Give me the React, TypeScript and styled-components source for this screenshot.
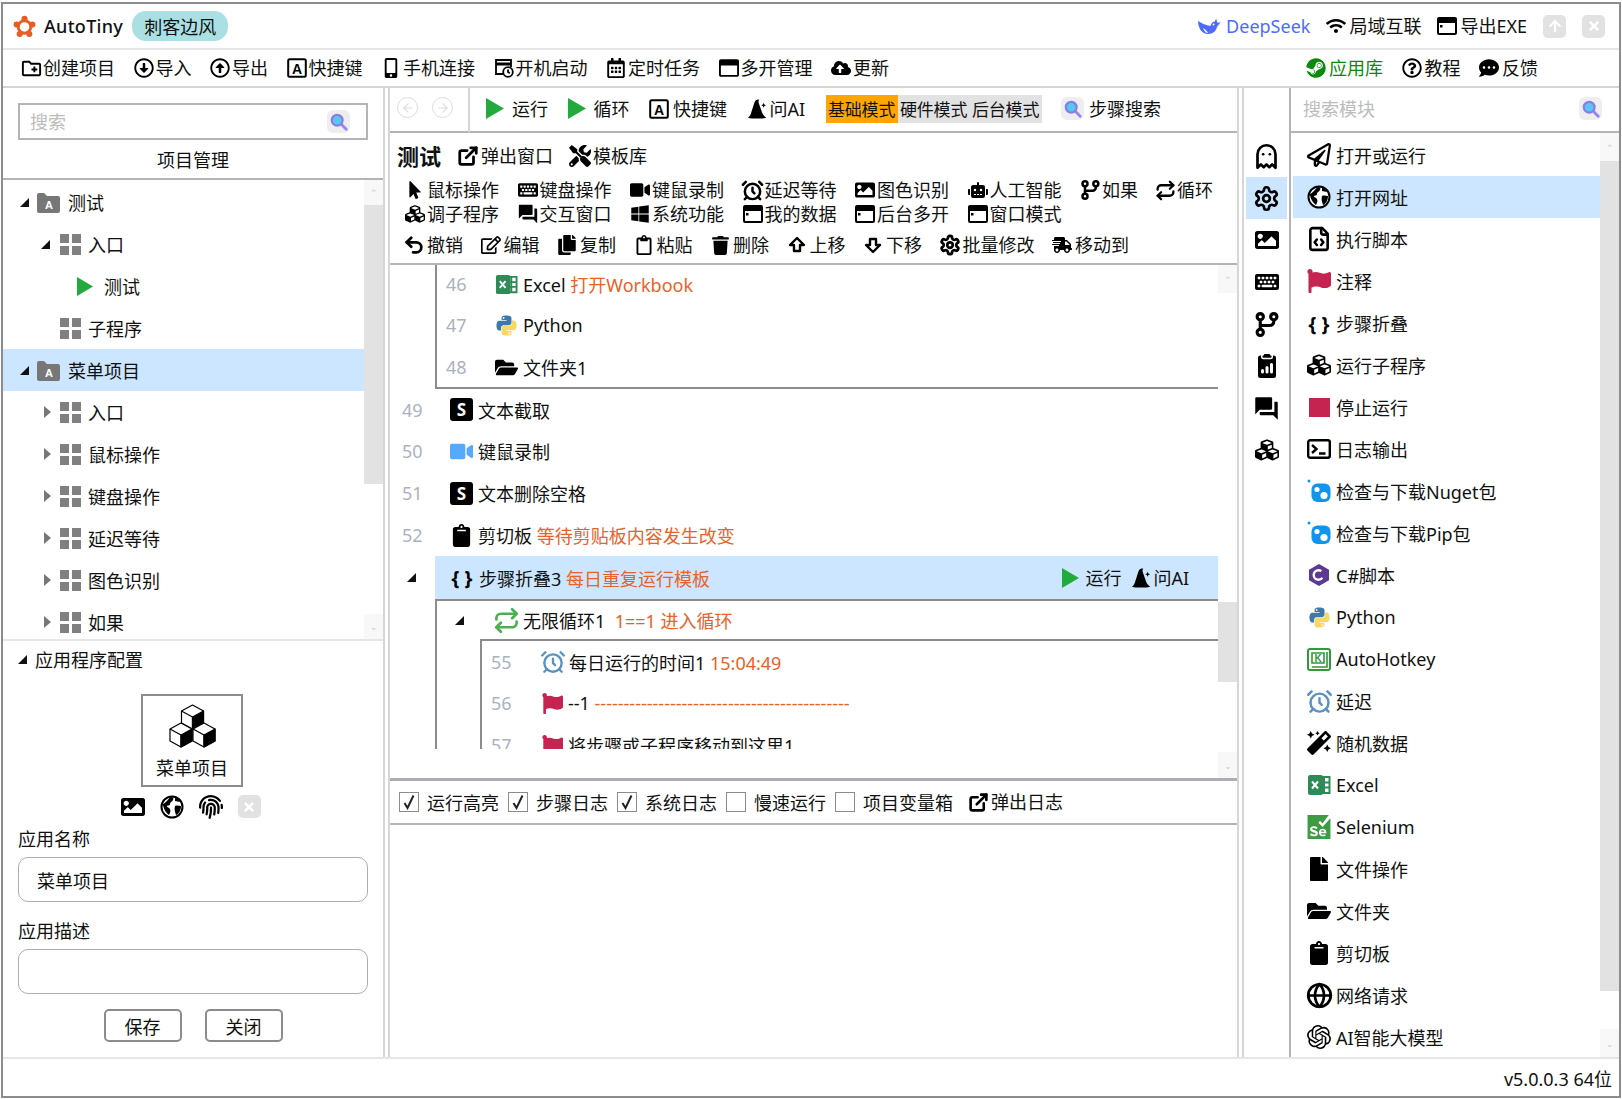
import React from "react";
import styled, { createGlobalStyle } from "styled-components";
import {
    FaRegArrowAltCircleDown,
    FaRegArrowAltCircleUp,
    FaMobileAlt,
    FaRegCalendarAlt,
    FaRegWindowMaximize,
    FaCloudUploadAlt,
    FaSteam,
    FaRegQuestionCircle,
    FaCommentDots,
    FaWifi,
    FaArrowUp,
    FaTimes,
    FaMousePointer,
    FaKeyboard,
    FaVideo,
    FaImage,
    FaRobot,
    FaCubes,
    FaWindows,
    FaRegEdit,
    FaCopy,
    FaRegClipboard,
    FaTrash,
    FaShippingFast,
    FaTools,
    FaRegPaperPlane,
    FaFlag,
    FaMagic,
    FaFile,
    FaFolderOpen,
    FaClipboard,
    FaFingerprint,
} from "react-icons/fa";
import { MdOutlineCreateNewFolder, MdForum } from "react-icons/md";
import { BsClipboard2DataFill } from "react-icons/bs";
import { SiSelenium, SiOpenai } from "react-icons/si";
import {
    LuAlarmClock,
    LuArrowBigDown,
    LuArrowBigUp,
    LuArrowLeft,
    LuArrowRight,
    LuExternalLink,
    LuFileCode,
    LuGhost,
    LuGlobe,
    LuRepeat,
    LuSettings,
    LuUndo2,
} from "react-icons/lu";

const GlobalStyle = createGlobalStyle`
    html, body {
        margin: 0;
        padding: 0;
        background: #fff;
    }
    body {
        font-family: "Noto Sans", "Noto Sans CJK SC", sans-serif;
        font-size: 18px;
        color: #111;
        overflow: hidden;
    }
    * {
        box-sizing: border-box;
    }
    svg {
        flex: none;
    }
`;

const Page = styled.div`
    width: 1622px;
    height: 1099px;
    padding: 2px 1px 1px 1px;
`;

const Window = styled.div`
    width: 100%;
    height: 100%;
    border: 2px solid #8c8c8c;
    display: flex;
    flex-direction: column;
    background: #fff;
`;

const TitleBar = styled.div`
    height: 46px;
    flex: none;
    display: flex;
    align-items: center;
    padding: 0 14px 0 10px;
    border-bottom: 2px solid #e6e6e6;
`;

const AppName = styled.span`
    margin-left: 8px;
    font-weight: 500;
    font-size: 18px;
    letter-spacing: 0.3px;
`;

const Chip = styled.span`
    margin-left: 9px;
    width: 96px;
    height: 30px;
    border-radius: 14px;
    background: #aae0e3;
    display: flex;
    align-items: center;
    justify-content: center;
`;

const Spacer = styled.div`
    flex: 1;
`;

const Item = styled.span<{ $gap?: number; $color?: string }>`
    display: inline-flex;
    align-items: center;
    gap: ${(p) => p.$gap ?? 2}px;
    color: ${(p) => p.$color ?? "inherit"};
    white-space: nowrap;
    line-height: 24px;
`;

const Ico = styled.span<{ $s?: number; $w?: number; $c?: string }>`
    flex: none;
    display: inline-flex;
    align-items: center;
    justify-content: center;
    width: ${(p) => p.$w ?? p.$s ?? 20}px;
    height: ${(p) => p.$s ?? 20}px;
    font-size: ${(p) => p.$s ?? 20}px;
    color: ${(p) => p.$c ?? "#000"};
`;

const TitleRight = styled.div`
    display: flex;
    align-items: center;
    gap: 16px;
`;

const WinButton = styled.span`
    width: 23px;
    height: 23px;
    border-radius: 5px;
    background: #e2e2e2;
    color: #fff;
    display: inline-flex;
    align-items: center;
    justify-content: center;
    font-size: 14px;
`;

const MenuBar = styled.div`
    height: 38px;
    flex: none;
    display: flex;
    align-items: center;
    gap: 18.5px;
    padding: 0 81px 0 18px;
    border-bottom: 2px solid #d4d4d4;
`;

const Body = styled.div`
    flex: 1;
    min-height: 0;
    display: flex;
`;

const LeftPanel = styled.div`
    width: 380px;
    flex: none;
    display: flex;
    flex-direction: column;
`;

const Splitter = styled.div`
    width: 7px;
    flex: none;
    border-left: 2px solid #d6d6d6;
    border-right: 2px solid #d6d6d6;
`;

const SearchWrap = styled.div`
    margin: 15px 15px 0 15px;
    height: 37px;
    border: 2px solid #b4b4b8;
    display: flex;
    align-items: center;
    padding: 0 16px 0 10px;
`;

const SearchInput = styled.input`
    flex: 1;
    min-width: 0;
    border: none;
    outline: none;
    background: transparent;
    font: inherit;
    color: #111;
    padding: 0;
    &::placeholder {
        color: #bcbcbc;
        opacity: 1;
    }
`;

const SearchBtn = styled.span`
    width: 23px;
    height: 23px;
    border-radius: 6px;
    background: #eeeef0;
    display: inline-flex;
    align-items: center;
    justify-content: center;
    flex: none;
`;

const TreeTitle = styled.div`
    height: 40px;
    flex: none;
    display: flex;
    align-items: center;
    justify-content: center;
    border-bottom: 2px solid #b4b4b8;
`;

const TreeArea = styled.div`
    height: 461px;
    flex: none;
    display: flex;
    border-bottom: 2px solid #e6e6e6;
`;

const TreeList = styled.div`
    flex: 1;
    min-width: 0;
    overflow: hidden;
    padding-top: 1px;
`;

const TreeRow = styled.div<{ $pad: number; $active?: boolean }>`
    height: 42px;
    display: flex;
    align-items: center;
    padding-left: ${(p) => p.$pad}px;
    background: ${(p) => (p.$active ? "#cce6ff" : "transparent")};
`;

const TreeLabel = styled.span<{ $ml: number }>`
    margin-left: ${(p) => p.$ml}px;
`;

const ArrowSlot = styled.span<{ $w: number }>`
    width: ${(p) => p.$w}px;
    flex: none;
    display: inline-flex;
    align-items: center;
`;

const Track = styled.div`
    width: 19px;
    flex: none;
    display: flex;
    flex-direction: column;
    background: #fff;
`;

const TrackBtn = styled.div<{ $h: number }>`
    height: ${(p) => p.$h}px;
    flex: none;
    background: #f8f8f8;
    color: #c8c8c8;
    font-size: 9px;
    display: flex;
    align-items: center;
    justify-content: center;
`;

const TrackGap = styled.div<{ $h: number }>`
    height: ${(p) => p.$h}px;
    flex: none;
`;

const Thumb = styled.div<{ $h: number }>`
    height: ${(p) => p.$h}px;
    flex: none;
    background: #e2e2e2;
`;

const Config = styled.div`
    flex: 1;
    min-height: 0;
    display: flex;
    flex-direction: column;
    padding: 0 15px;
`;

const ConfigHead = styled.div`
    height: 36px;
    flex: none;
    display: flex;
    align-items: center;
    gap: 8px;
`;

const AppCard = styled.div`
    margin: 17px auto 0;
    width: 102px;
    height: 93px;
    flex: none;
    border: 2px solid #8c8c8c;
    display: flex;
    flex-direction: column;
    align-items: center;
    padding-top: 8px;
    gap: 5px;
    transform: translateX(-1px);
`;

const CardIcons = styled.div`
    margin-top: 8px;
    display: flex;
    justify-content: center;
    gap: 15px;
    height: 24px;
    flex: none;
    margin-left: -5px;
`;

const FieldLabel = styled.div<{ $mt: number }>`
    height: 24px;
    flex: none;
    line-height: 24px;
    margin-top: ${(p) => p.$mt}px;
`;

const Field = styled.div`
    height: 45px;
    flex: none;
    border: 1.5px solid #adadb2;
    border-radius: 10px;
    display: flex;
    align-items: center;
    padding-left: 18px;
    margin-top: 6px;
`;

const Buttons = styled.div`
    margin-top: 15px;
    display: flex;
    justify-content: center;
    gap: 23px;
`;

const Button = styled.button`
    width: 78px;
    height: 33px;
    border: 2px solid #8c8c8c;
    border-radius: 5px;
    background: #fff;
    font: inherit;
    color: #111;
    padding: 0;
`;

const Center = styled.div`
    width: 847px;
    flex: none;
    display: flex;
    flex-direction: column;
`;

const ToolBar = styled.div`
    height: 45px;
    flex: none;
    display: flex;
    align-items: center;
    padding-bottom: 2px;
    border-bottom: 2px solid #b4b4b8;
`;

const NavGroup = styled.div`
    width: 80px;
    height: 45px;
    margin-top: 2px;
    flex: none;
    display: flex;
    align-items: center;
    gap: 14px;
    padding: 0 0 4px 7px;
    border-right: 2px solid #d6d6d6;
`;

const NavBtn = styled.span`
    width: 21px;
    height: 21px;
    border: 1.5px solid #dcdcdc;
    border-radius: 50%;
    color: #dcdcdc;
    font-size: 14px;
    display: inline-flex;
    align-items: center;
    justify-content: center;
`;

const ToolItems = styled.div`
    display: flex;
    align-items: center;
    padding-left: 16px;
    gap: 19.5px;
`;

const ModeGroup = styled.div`
    display: flex;
    height: 28px;
    background: #e2e2e2;
    margin-left: 1px;
`;

const Mode = styled.span<{ $on?: boolean }>`
    width: 72px;
    background: ${(p) => (p.$on ? "#ffa500" : "transparent")};
    display: flex;
    align-items: center;
    justify-content: center;
    font-size: 17px;
    letter-spacing: -0.2px;
    white-space: nowrap;
`;

const Heading = styled.div`
    flex: none;
    height: 132px;
    display: flex;
    flex-direction: column;
    border-bottom: 2px solid #b4b4b8;
`;

const NameRow = styled.div`
    height: 42px;
    flex: none;
    display: flex;
    align-items: center;
    gap: 16px;
    padding-left: 7px;
    padding-top: 3px;
`;

const NameTitle = styled.span`
    font-size: 22px;
    font-weight: 700;
    line-height: 1;
`;

const ToolGrid = styled.div`
    margin-top: 3px;
    padding-left: 16px;
    display: grid;
    grid-template-columns: repeat(6, 112.5px) 75px auto;
    grid-auto-rows: 24px;
`;

const ActionRow = styled.div`
    margin-top: 7px;
    padding-left: 15px;
    display: flex;
    gap: 18.5px;
`;

const StepsArea = styled.div`
    height: 516px;
    flex: none;
    display: flex;
    border-bottom: 3px solid #adadb2;
`;

const StepsColumn = styled.div`
    flex: 1;
    min-width: 0;
    height: 484px;
    overflow: hidden;
`;

const NestBlock = styled.div<{ $ml: number; $top?: boolean; $bottom?: boolean }>`
    margin-left: ${(p) => p.$ml}px;
    border-left: 2px solid #8c8c8c;
    border-top: ${(p) => (p.$top ? "2px solid #8c8c8c" : "none")};
    border-bottom: ${(p) => (p.$bottom ? "2px solid #8c8c8c" : "none")};
`;

const StepRow = styled.div<{ $h?: number }>`
    height: ${(p) => p.$h ?? 42}px;
    display: flex;
    align-items: center;
`;

const Gutter = styled.div<{ $w: number; $pad: number }>`
    width: ${(p) => p.$w}px;
    flex: none;
    padding-left: ${(p) => p.$pad}px;
    color: #aab2c2;
    display: flex;
    align-items: center;
`;

const StepBody = styled.div<{ $active?: boolean }>`
    flex: 1;
    min-width: 0;
    height: 100%;
    display: flex;
    align-items: center;
    gap: 5px;
    padding-left: 15px;
    padding-right: 29px;
    background: ${(p) => (p.$active ? "#cce6ff" : "transparent")};
    white-space: nowrap;
`;

const Note = styled.span`
    color: #e8622a;
`;

const RowActions = styled.div`
    margin-left: auto;
    display: flex;
    align-items: center;
    gap: 10px;
`;

const SBadge = styled.span`
    width: 23px;
    height: 23px;
    border-radius: 3px;
    background: #000;
    color: #fff;
    font-weight: 700;
    font-size: 17px;
    display: inline-flex;
    align-items: center;
    justify-content: center;
    flex: none;
`;

const Braces = styled.span`
    width: 24px;
    flex: none;
    font-weight: 700;
    font-size: 20px;
    text-align: center;
    color: #000;
    white-space: nowrap;
`;

const CheckRow = styled.div`
    height: 44px;
    flex: none;
    display: flex;
    align-items: center;
    padding-left: 9px;
    border-bottom: 2px solid #b4b4b8;
`;

const CheckItem = styled.label`
    display: inline-flex;
    align-items: center;
    gap: 8px;
    margin-right: 9px;
`;

const CheckBox = styled.span`
    width: 20px;
    height: 20px;
    border: 1.5px solid #8c8c8c;
    display: inline-flex;
    align-items: center;
    justify-content: center;
    flex: none;
`;

const PopLog = styled(Item)`
    margin-left: 6px;
`;

const LogArea = styled.div`
    flex: 1;
    min-height: 0;
`;

const SideRail = styled.div`
    width: 47px;
    flex: none;
    display: flex;
    flex-direction: column;
    padding-top: 47px;
    border-right: 2px solid #b4b4b8;
`;

const RailBtn = styled.div<{ $active?: boolean }>`
    height: 42px;
    margin: 0 2px;
    display: flex;
    align-items: center;
    justify-content: center;
    background: ${(p) => (p.$active ? "#cce6ff" : "transparent")};
`;

const Modules = styled.div`
    flex: 1;
    min-width: 0;
    display: flex;
    flex-direction: column;
`;

const ModuleSearch = styled.div`
    height: 45px;
    flex: none;
    display: flex;
    align-items: center;
    padding: 0 17px 2px 12px;
    border-bottom: 2px solid #b4b4b8;
`;

const ModuleArea = styled.div`
    flex: 1;
    min-height: 0;
    display: flex;
`;

const ModuleList = styled.div`
    flex: 1;
    min-width: 0;
    padding: 1px 0 0 2px;
    overflow: hidden;
`;

const ModuleRow = styled.div<{ $active?: boolean }>`
    height: 42px;
    display: flex;
    align-items: center;
    gap: 5px;
    padding-left: 14px;
    background: ${(p) => (p.$active ? "#cce6ff" : "transparent")};
`;

const StopSquare = styled.span`
    width: 21px;
    height: 19px;
    background: #c4244f;
    display: block;
`;

const StatusBar = styled.div`
    height: 39px;
    flex: none;
    display: flex;
    align-items: center;
    justify-content: flex-end;
    padding-right: 7px;
    border-top: 2px solid #e6e6e6;
`;

const Logo = () => (
    <svg width="23" height="23" viewBox="0 0 24 24">
        <circle cx="12" cy="12.5" r="6.5" fill="none" stroke="#e85d26" strokeWidth="3" />
        <circle cx="12" cy="4" r="3.2" fill="#e85d26" />
        <circle cx="3.8" cy="10" r="3.2" fill="#e85d26" />
        <circle cx="20.2" cy="10" r="3.2" fill="#e85d26" />
        <circle cx="7" cy="19.8" r="3.2" fill="#e85d26" />
        <circle cx="17" cy="19.8" r="3.2" fill="#e85d26" />
    </svg>
);

const Whale = () => (
    <svg width="24" height="22" viewBox="0 0 24 22" fill="#4d6bfe">
        <path d="M1 6c0 7 4 13 10 13 5 0 8-3 9-7 1-2 3-3 3.5-5-1 .8-2.5 1-3.5.2 0-1-.5-2.5-.5-3.2-1 .5-1.5 1.500-1.5 2.500-2.500 0-4 2-4.500 4.500C9 10.500 5 8.500 1 6z" />
        <path d="M6 13c2 1 4 3 5 5-2 0-4-2-5-5z" fill="#fff" />
        <circle cx="16.5" cy="9.5" r="1" fill="#fff" />
    </svg>
);

const WindowIcon = ({ size = 20 }: { size?: number }) => (
    <svg width={size} height={size} viewBox="0 0 20 20">
        <rect x="1" y="2" width="18" height="16" fill="none" stroke="#000" strokeWidth="2" rx="1" />
        <rect x="1" y="2" width="18" height="5" fill="#000" />
        <rect x="3" y="9" width="2.5" height="2.5" fill="#000" />
    </svg>
);

const BootIcon = () => (
    <svg width="20" height="20" viewBox="0 0 20 20" fill="none" stroke="#000" strokeWidth="1.8">
        <path d="M9 16H2V2h15v7" />
        <path d="M2 6h15" strokeWidth="3" />
        <circle cx="14" cy="14" r="4.8" fill="#fff" />
        <path d="M14 11.5V14l1.8 1.2" />
    </svg>
);

const BoxedA = () => (
    <svg width="20" height="20" viewBox="0 0 20 20">
        <rect x="1.2" y="1.2" width="17.6" height="17.6" rx="1.5" fill="none" stroke="#000" strokeWidth="2" />
        <text x="10" y="15.5" fontSize="14" fontWeight="700" textAnchor="middle" fontFamily="Liberation Sans, sans-serif">
            A
        </text>
    </svg>
);

const Magnifier = () => (
    <svg width="18" height="18" viewBox="0 0 20 20">
        <path d="M12 12l6 6" stroke="#9a86e8" strokeWidth="3.2" strokeLinecap="round" />
        <circle cx="8" cy="8" r="6" fill="#55c8ee" stroke="#8a7ce6" strokeWidth="2.4" />
    </svg>
);

const Play = ({ size = 18 }: { size?: number }) => (
    <svg width={size} height={size + 3} viewBox="0 0 16 20" preserveAspectRatio="none">
        <path d="M0 0l16 10L0 20z" fill="#22aa3c" />
    </svg>
);

const GridIcon = () => (
    <svg width="21" height="21" viewBox="0 0 21 21" fill="#808080">
        <rect width="9" height="9" />
        <rect x="12" width="9" height="9" />
        <rect y="12" width="9" height="9" />
        <rect x="12" y="12" width="9" height="9" />
    </svg>
);

const ProjectFolder = () => (
    <svg width="23" height="21" viewBox="0 0 23 21">
        <path d="M0 3a2 2 0 0 1 2-2h5l3 3h11a2 2 0 0 1 2 2v13a2 2 0 0 1-2 2H2a2 2 0 0 1-2-2z" fill="#777" />
        <text x="12" y="17" fontSize="11" fontWeight="700" fill="#fff" textAnchor="middle" fontFamily="Liberation Sans, sans-serif">
            A
        </text>
    </svg>
);

const Open = ({ size = 9 }: { size?: number }) => (
    <svg width={size} height={size} viewBox="0 0 9 9">
        <path d="M9 0v9H0z" fill="#111" />
    </svg>
);

const Closed = () => (
    <svg width="7" height="12" viewBox="0 0 7 12">
        <path d="M0 0l7 6-7 6z" fill="#777" />
    </svg>
);

const ExcelIcon = ({ size = 23 }: { size?: number }) => (
    <svg width={size} height={size} viewBox="0 0 24 24">
        <rect x="1" y="2" width="15" height="20" rx="2" fill="#2e8b57" />
        <path d="M12 4h10.5v16H12M12 9.5h10.5M12 14.5h10.5M17 4v16" fill="none" stroke="#2e8b57" strokeWidth="2" />
        <path d="M5 8.5l6 7M11 8.5l-6 7" stroke="#fff" strokeWidth="2" />
    </svg>
);

const PYTHON_PATH =
    "M11.9 1.5c-5.3 0-5 2.3-5 2.3v2.5H12V7H4.9S1.5 6.6 1.5 12s3 5.2 3 5.2h1.800v-2.500s-.1-3 3-3h5.100s2.800 0 2.800-2.800V4.300s.4-2.800-5.300-2.800zM9 3.200a.9.9 0 1 1 0 1.800.9.9 0 0 1 0-1.800z";

const PythonIcon = ({ size = 23 }: { size?: number }) => (
    <svg width={size} height={size} viewBox="0 0 24 24">
        <path d={PYTHON_PATH} fill="#3d7aab" />
        <path d={PYTHON_PATH} fill="#f7d865" transform="rotate(180 12 12)" />
    </svg>
);

const NugetIcon = () => (
    <svg width="24" height="24" viewBox="0 0 24 24">
        <circle cx="2" cy="2" r="1.5" fill="#1194ee" />
        <rect x="4.5" y="4.5" width="19" height="18.5" rx="6" fill="#1194ee" />
        <circle cx="10" cy="10.5" r="2.6" fill="#fff" />
        <circle cx="17" cy="16.5" r="3.6" fill="#fff" />
    </svg>
);

const CSharpIcon = () => (
    <svg width="22" height="24" viewBox="0 0 22 24">
        <path d="M11 1l10 5.7v10.6L11 23 1 17.3V6.7z" fill="#5c3a94" />
        <circle cx="10.5" cy="12" r="4.8" fill="none" stroke="#fff" strokeWidth="2.4" strokeDasharray="22 8" strokeDashoffset="-3" />
    </svg>
);

const AhkIcon = () => (
    <svg width="24" height="23" viewBox="0 0 24 23">
        <rect x="1" y="1" width="22" height="21" rx="2" fill="none" stroke="#2e9a38" strokeWidth="2" />
        <path d="M5 5h12v10H5zM20 4v15H5" fill="none" stroke="#2e9a38" strokeWidth="1.6" />
        <text x="11" y="13.5" fontSize="10" fontWeight="700" fill="#2e9a38" textAnchor="middle" fontFamily="Liberation Sans, sans-serif">
            K
        </text>
    </svg>
);

const CubesArt = () => (
    <svg width="47" height="45" viewBox="0 0 47 45" stroke="#000" strokeWidth="1.2" strokeLinejoin="round">
        <path d="M23.5 1l11 6v12l-11 6-11-6V7z" fill="#fff" />
        <path d="M23.5 13l11-6v12l-11 6z" fill="#000" />
        <path d="M12.5 7l11 6v12" fill="none" />
        <path d="M12 19l11 6v12l-11 6-11-6V25z" fill="#fff" />
        <path d="M12 31l11-6v12l-11 6z" fill="#000" />
        <path d="M1 25l11 6v12" fill="none" />
        <path d="M35 19l11 6v12l-11 6-11-6V25z" fill="#fff" />
        <path d="M35 31l11-6v12l-11 6z" fill="#000" />
        <path d="M24 25l11 6v12" fill="none" />
    </svg>
);

const Tick = () => (
    <svg width="12" height="16" viewBox="0 0 12 16">
        <path d="M1.5 9l3 5L10.5 1.5" fill="none" stroke="#222" strokeWidth="2" />
    </svg>
);

const BranchIcon = ({ size = 20 }: { size?: number }) => (
    <svg width={size} height={size} viewBox="0 0 24 24" fill="none" stroke="#000" strokeWidth="3">
        <circle cx="6" cy="4.5" r="3" />
        <circle cx="19" cy="4.5" r="3" />
        <circle cx="6" cy="19.5" r="3" />
        <path d="M6 7.5v9M19 7.5V9a4 4 0 0 1-4 4H6" />
    </svg>
);

const WizardHat = ({ size = 21 }: { size?: number }) => (
    <svg width={size} height={size} viewBox="0 0 24 24" fill="#000">
        <path d="M1 22.5c2-1 3-3 4-6.5l3.5-11c.8-2.5 3.5-4 5.500-3-1 1-1 2.500-.5 4l3.500 10c.8 2.500 2.500 5 5 6.500-3 1-6 1-10.500 1s-7.500 0-10.500-1z" />
        <path d="M19 5.5l.8 2 2 .7-2 .8-.8 2-.8-2-2-.8 2-.7z" />
    </svg>
);

const TerminalIcon = () => (
    <svg width="24" height="20" viewBox="0 0 24 20" fill="none" stroke="#000" strokeWidth="2.4">
        <rect x="1.2" y="1.2" width="21.6" height="17.6" rx="2" />
        <path d="M5 6l4.5 4L5 14M12 14.5h6.5" />
    </svg>
);

const EarthIcon = ({ size = 24 }: { size?: number }) => (
    <svg width={size} height={size} viewBox="0 0 24 24" fill="#000">
        <circle cx="12" cy="12" r="10.5" fill="#fff" stroke="#000" strokeWidth="2" />
        <path d="M3 9c3-1 5-5 8-7 2 0 3 1 2 3-1 2-3 2-3 4s-2 1-3 2c0 2 2 1 3 3s0 4-1 6C6 18 3 13 3 9z" />
        <path d="M15 11c2-1 4 0 6 0 0 4-2 8-5 9-1-3-2-6-1-9z" />
        <path d="M15 3c2 0 4 2 5 4-2 0-3-1-5-1z" />
    </svg>
);

const menuItems = [
    { icon: <MdOutlineCreateNewFolder size={23} />, label: "创建项目" },
    { icon: <FaRegArrowAltCircleDown />, label: "导入" },
    { icon: <FaRegArrowAltCircleUp />, label: "导出" },
    { icon: <BoxedA />, label: "快捷键" },
    { icon: <FaMobileAlt />, label: "手机连接" },
    { icon: <BootIcon />, label: "开机启动" },
    { icon: <FaRegCalendarAlt />, label: "定时任务" },
    { icon: <FaRegWindowMaximize />, label: "多开管理" },
    { icon: <FaCloudUploadAlt />, label: "更新" },
];

const toolItems = [
    { icon: <FaMousePointer />, label: "鼠标操作" },
    { icon: <FaKeyboard size={20} />, label: "键盘操作" },
    { icon: <FaVideo size={20} />, label: "键鼠录制" },
    { icon: <LuAlarmClock size={23} strokeWidth={2.6} />, label: "延迟等待" },
    { icon: <FaImage size={20} />, label: "图色识别" },
    { icon: <FaRobot size={20} />, label: "人工智能" },
    { icon: <BranchIcon />, label: "如果" },
    { icon: <LuRepeat size={21} strokeWidth={2.6} />, label: "循环" },
    { icon: <FaCubes size={20} />, label: "调子程序" },
    { icon: <MdForum size={22} />, label: "交互窗口" },
    { icon: <FaWindows size={20} />, label: "系统功能" },
    { icon: <WindowIcon size={20} />, label: "我的数据" },
    { icon: <WindowIcon size={20} />, label: "后台多开" },
    { icon: <WindowIcon size={20} />, label: "窗口模式" },
];

const actionItems = [
    { icon: <LuUndo2 size={22} strokeWidth={3} />, label: "撤销" },
    { icon: <FaRegEdit size={20} />, label: "编辑" },
    { icon: <FaCopy size={20} />, label: "复制" },
    { icon: <FaRegClipboard size={20} />, label: "粘贴" },
    { icon: <FaTrash size={19} />, label: "删除" },
    { icon: <LuArrowBigUp size={24} strokeWidth={2.4} />, label: "上移" },
    { icon: <LuArrowBigDown size={24} strokeWidth={2.4} />, label: "下移" },
    { icon: <LuSettings size={22} strokeWidth={3} />, label: "批量修改" },
    { icon: <FaShippingFast size={20} />, label: "移动到" },
];

const treeChildren = ["入口", "鼠标操作", "键盘操作", "延迟等待", "图色识别", "如果"];

const railIcons = [
    <LuGhost size={27} strokeWidth={2.4} />,
    <LuSettings size={27} strokeWidth={2.4} />,
    <FaImage />,
    <FaKeyboard />,
    <BranchIcon size={25} />,
    <BsClipboard2DataFill />,
    <MdForum size={27} />,
    <FaCubes />,
];

const modules = [
    { icon: <FaRegPaperPlane />, label: "打开或运行" },
    { icon: <EarthIcon />, label: "打开网址" },
    { icon: <LuFileCode size={26} strokeWidth={2.4} />, label: "执行脚本" },
    { icon: <FaFlag />, color: "#c4244f", label: "注释" },
    { icon: <Braces>{"{ }"}</Braces>, label: "步骤折叠" },
    { icon: <FaCubes />, label: "运行子程序" },
    { icon: <StopSquare />, label: "停止运行" },
    { icon: <TerminalIcon />, label: "日志输出" },
    { icon: <NugetIcon />, label: "检查与下载Nuget包" },
    { icon: <NugetIcon />, label: "检查与下载Pip包" },
    { icon: <CSharpIcon />, label: "C#脚本" },
    { icon: <PythonIcon />, label: "Python" },
    { icon: <AhkIcon />, label: "AutoHotkey" },
    { icon: <LuAlarmClock size={27} strokeWidth={2.2} />, color: "#5b92c0", label: "延迟" },
    { icon: <FaMagic />, label: "随机数据" },
    { icon: <ExcelIcon size={24} />, label: "Excel" },
    { icon: <SiSelenium />, color: "#3d9b45", label: "Selenium" },
    { icon: <FaFile />, label: "文件操作" },
    { icon: <FaFolderOpen />, label: "文件夹" },
    { icon: <FaClipboard />, label: "剪切板" },
    { icon: <LuGlobe size={27} strokeWidth={2.4} />, label: "网络请求" },
    { icon: <SiOpenai />, label: "AI智能大模型" },
];

const ScrollTrack = ({ top, thumb, gap, bottom }: { top: number; thumb: number; gap: number; bottom: number }) => (
    <Track>
        <TrackBtn $h={top}>⌃</TrackBtn>
        <TrackGap $h={gap} />
        <Thumb $h={thumb} />
        <Spacer />
        <TrackBtn $h={bottom}>⌄</TrackBtn>
    </Track>
);

const App = () => {
    return (
        <Page>
            <GlobalStyle />
            <Window>
                <TitleBar>
                    <Logo />
                    <AppName>AutoTiny</AppName>
                    <Chip>刺客边风</Chip>
                    <Spacer />
                    <TitleRight>
                        <Item $gap={5} $color="#4d6bfe">
                            <Whale />
                            DeepSeek
                        </Item>
                        <Item $gap={3}>
                            <Ico $s={20}><FaWifi /></Ico>
                            局域互联
                        </Item>
                        <Item $gap={3}>
                            <WindowIcon />
                            导出EXE
                        </Item>
                        <WinButton><FaArrowUp /></WinButton>
                        <WinButton><FaTimes /></WinButton>
                    </TitleRight>
                </TitleBar>

                <MenuBar>
                    {menuItems.map((m) => (
                        <Item key={m.label}>
                            <Ico>{m.icon}</Ico>
                            {m.label}
                        </Item>
                    ))}
                    <Spacer />
                    <Item $color="#0a8a0a" $gap={3}>
                        <Ico $c="#0a8a0a"><FaSteam /></Ico>
                        应用库
                    </Item>
                    <Item $gap={3}>
                        <Ico><FaRegQuestionCircle /></Ico>
                        教程
                    </Item>
                    <Item $gap={3}>
                        <Ico><FaCommentDots /></Ico>
                        反馈
                    </Item>
                </MenuBar>

                <Body>
                    <LeftPanel>
                        <SearchWrap>
                            <SearchInput placeholder="搜索" readOnly />
                            <SearchBtn><Magnifier /></SearchBtn>
                        </SearchWrap>
                        <TreeTitle>项目管理</TreeTitle>
                        <TreeArea>
                            <TreeList>
                                <TreeRow $pad={17}>
                                    <ArrowSlot $w={17}><Open /></ArrowSlot>
                                    <ProjectFolder />
                                    <TreeLabel $ml={8}>测试</TreeLabel>
                                </TreeRow>
                                <TreeRow $pad={38}>
                                    <ArrowSlot $w={19}><Open /></ArrowSlot>
                                    <GridIcon />
                                    <TreeLabel $ml={7}>入口</TreeLabel>
                                </TreeRow>
                                <TreeRow $pad={74}>
                                    <Play size={16} />
                                    <TreeLabel $ml={11}>测试</TreeLabel>
                                </TreeRow>
                                <TreeRow $pad={57}>
                                    <GridIcon />
                                    <TreeLabel $ml={7}>子程序</TreeLabel>
                                </TreeRow>
                                <TreeRow $pad={17} $active>
                                    <ArrowSlot $w={17}><Open /></ArrowSlot>
                                    <ProjectFolder />
                                    <TreeLabel $ml={8}>菜单项目</TreeLabel>
                                </TreeRow>
                                {treeChildren.map((c) => (
                                    <TreeRow $pad={41} key={c}>
                                        <ArrowSlot $w={16}><Closed /></ArrowSlot>
                                        <GridIcon />
                                        <TreeLabel $ml={7}>{c}</TreeLabel>
                                    </TreeRow>
                                ))}
                            </TreeList>
                            <ScrollTrack top={25} thumb={279} gap={0} bottom={25} />
                        </TreeArea>

                        <Config>
                            <ConfigHead>
                                <Open />
                                应用程序配置
                            </ConfigHead>
                            <AppCard>
                                <CubesArt />
                                菜单项目
                            </AppCard>
                            <CardIcons>
                                <Ico $s={24}><FaImage /></Ico>
                                <EarthIcon />
                                <Ico $s={24}><FaFingerprint /></Ico>
                                <WinButton><FaTimes /></WinButton>
                            </CardIcons>
                            <FieldLabel $mt={8}>应用名称</FieldLabel>
                            <Field>菜单项目</Field>
                            <FieldLabel $mt={17}>应用描述</FieldLabel>
                            <Field />
                            <Buttons>
                                <Button>保存</Button>
                                <Button>关闭</Button>
                            </Buttons>
                        </Config>
                    </LeftPanel>

                    <Splitter />

                    <Center>
                        <ToolBar>
                            <NavGroup>
                                <NavBtn><LuArrowLeft /></NavBtn>
                                <NavBtn><LuArrowRight /></NavBtn>
                            </NavGroup>
                            <ToolItems>
                                <Item $gap={8}><Play />运行</Item>
                                <Item $gap={8}><Play />循环</Item>
                                <Item $gap={4}><BoxedA />快捷键</Item>
                                <Item $gap={2}><WizardHat />问AI</Item>
                                <ModeGroup>
                                    <Mode $on>基础模式</Mode>
                                    <Mode>硬件模式</Mode>
                                    <Mode>后台模式</Mode>
                                </ModeGroup>
                                <Item $gap={5}><SearchBtn><Magnifier /></SearchBtn>步骤搜索</Item>
                            </ToolItems>
                        </ToolBar>

                        <Heading>
                            <NameRow>
                                <NameTitle>测试</NameTitle>
                                <Item>
                                    <Ico $s={22}><LuExternalLink strokeWidth={3} /></Ico>
                                    弹出窗口
                                </Item>
                                <Item>
                                    <Ico $s={22}><FaTools /></Ico>
                                    模板库
                                </Item>
                            </NameRow>
                            <ToolGrid>
                                {toolItems.map((t) => (
                                    <Item key={t.label} $gap={3}>
                                        <Ico $s={18}>{t.icon}</Ico>
                                        {t.label}
                                    </Item>
                                ))}
                            </ToolGrid>
                            <ActionRow>
                                {actionItems.map((a) => (
                                    <Item key={a.label} $gap={4}>
                                        <Ico $s={18}>{a.icon}</Ico>
                                        {a.label}
                                    </Item>
                                ))}
                            </ActionRow>
                        </Heading>

                        <StepsArea>
                            <StepsColumn>
                                <NestBlock $ml={45} $bottom>
                                    <StepRow $h={38}>
                                        <Gutter $w={43} $pad={9}>46</Gutter>
                                        <StepBody>
                                            <ExcelIcon />
                                            <span>Excel <Note>打开Workbook</Note></span>
                                        </StepBody>
                                    </StepRow>
                                    <StepRow $h={44}>
                                        <Gutter $w={43} $pad={9}>47</Gutter>
                                        <StepBody>
                                            <PythonIcon />
                                            <span>Python</span>
                                        </StepBody>
                                    </StepRow>
                                    <StepRow $h={40}>
                                        <Gutter $w={43} $pad={9}>48</Gutter>
                                        <StepBody>
                                            <Ico $s={23}><FaFolderOpen /></Ico>
                                            <span>文件夹1</span>
                                        </StepBody>
                                    </StepRow>
                                </NestBlock>
                                <StepRow $h={41}>
                                    <Gutter $w={45} $pad={12}>49</Gutter>
                                    <StepBody>
                                        <SBadge>S</SBadge>
                                        <span>文本截取</span>
                                    </StepBody>
                                </StepRow>
                                <StepRow>
                                    <Gutter $w={45} $pad={12}>50</Gutter>
                                    <StepBody>
                                        <Ico $s={23} $c="#55aaff"><FaVideo /></Ico>
                                        <span>键鼠录制</span>
                                    </StepBody>
                                </StepRow>
                                <StepRow>
                                    <Gutter $w={45} $pad={12}>51</Gutter>
                                    <StepBody>
                                        <SBadge>S</SBadge>
                                        <span>文本删除空格</span>
                                    </StepBody>
                                </StepRow>
                                <StepRow>
                                    <Gutter $w={45} $pad={12}>52</Gutter>
                                    <StepBody>
                                        <Ico $s={23}><FaClipboard /></Ico>
                                        <span>剪切板 <Note>等待剪贴板内容发生改变</Note></span>
                                    </StepBody>
                                </StepRow>
                                <StepRow $h={43}>
                                    <Gutter $w={45} $pad={17}><Open /></Gutter>
                                    <StepBody $active>
                                        <Braces>{"{ }"}</Braces>
                                        <span>步骤折叠3 <Note>每日重复运行模板</Note></span>
                                        <RowActions>
                                            <Item $gap={6}><Play size={17} />运行</Item>
                                            <Item $gap={1}><WizardHat /><span>问AI</span></Item>
                                        </RowActions>
                                    </StepBody>
                                </StepRow>
                                <NestBlock $ml={45} $top>
                                    <StepRow $h={38}>
                                        <Gutter $w={43} $pad={18}><Open /></Gutter>
                                        <StepBody>
                                            <Ico $s={23} $c="#4caf50"><LuRepeat size={27} strokeWidth={2.4} /></Ico>
                                            <span>无限循环1&nbsp;&nbsp;<Note>1==1 进入循环</Note></span>
                                        </StepBody>
                                    </StepRow>
                                    <NestBlock $ml={43} $top>
                                        <StepRow $h={41}>
                                            <Gutter $w={45} $pad={9}>55</Gutter>
                                            <StepBody>
                                                <Ico $s={22} $c="#5b92c0"><LuAlarmClock size={26} strokeWidth={2.2} /></Ico>
                                                <span>每日运行的时间1 <Note>15:04:49</Note></span>
                                            </StepBody>
                                        </StepRow>
                                        <StepRow>
                                            <Gutter $w={45} $pad={9}>56</Gutter>
                                            <StepBody>
                                                <Ico $s={21} $c="#c4244f"><FaFlag /></Ico>
                                                <span>--1 <Note>--------------------------------------------</Note></span>
                                            </StepBody>
                                        </StepRow>
                                        <StepRow>
                                            <Gutter $w={45} $pad={9}>57</Gutter>
                                            <StepBody>
                                                <Ico $s={21} $c="#c4244f"><FaFlag /></Ico>
                                                <span>将步骤或子程序移动到这里1</span>
                                            </StepBody>
                                        </StepRow>
                                    </NestBlock>
                                </NestBlock>
                            </StepsColumn>
                            <ScrollTrack top={28} gap={309} thumb={80} bottom={26} />
                        </StepsArea>

                        <CheckRow>
                            {["运行高亮", "步骤日志", "系统日志"].map((c) => (
                                <CheckItem key={c}>
                                    <CheckBox><Tick /></CheckBox>
                                    {c}
                                </CheckItem>
                            ))}
                            {["慢速运行", "项目变量箱"].map((c) => (
                                <CheckItem key={c}>
                                    <CheckBox />
                                    {c}
                                </CheckItem>
                            ))}
                            <PopLog>
                                <Ico $s={21}><LuExternalLink strokeWidth={3} /></Ico>
                                弹出日志
                            </PopLog>
                        </CheckRow>
                        <LogArea />
                    </Center>

                    <Splitter />

                    <SideRail>
                        {railIcons.map((icon, i) => (
                            <RailBtn key={i} $active={i === 1}>
                                <Ico $s={24}>{icon}</Ico>
                            </RailBtn>
                        ))}
                    </SideRail>

                    <Modules>
                        <ModuleSearch>
                            <SearchInput placeholder="搜索模块" readOnly />
                            <SearchBtn><Magnifier /></SearchBtn>
                        </ModuleSearch>
                        <ModuleArea>
                            <ModuleList>
                                {modules.map((m) => (
                                    <ModuleRow key={m.label} $active={m.label === "打开网址"}>
                                        <Ico $s={24} $c={m.color}>{m.icon}</Ico>
                                        {m.label}
                                    </ModuleRow>
                                ))}
                            </ModuleList>
                            <ScrollTrack top={28} thumb={830} gap={0} bottom={28} />
                        </ModuleArea>
                    </Modules>
                </Body>

                <StatusBar>v5.0.0.3 64位</StatusBar>
            </Window>
        </Page>
    );
};

export default App;
